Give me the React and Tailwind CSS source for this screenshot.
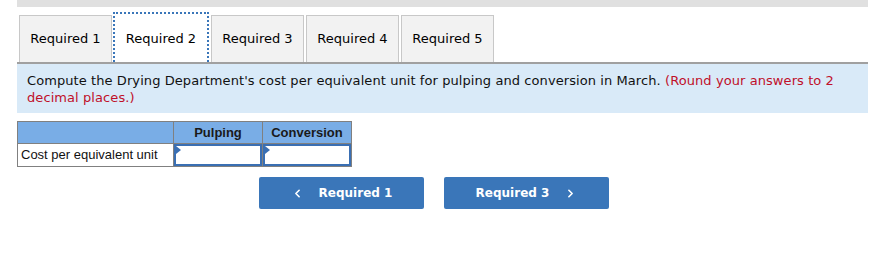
import { ChevronLeft, ChevronRight } from 'lucide-react'

const tabs = ['Required 1', 'Required 2', 'Required 3', 'Required 4', 'Required 5']

function Tab({ label, active }) {
  if (active) {
    return (
      <div className="ml-[1px] flex h-[50px] w-[96px] items-center justify-center border-2 border-b-0 border-dotted border-[#3a76b9] bg-white pt-[2px] text-[13px] text-black">
        {label}
      </div>
    )
  }
  return (
    <div className="ml-[2px] flex h-[47px] w-[93px] items-center justify-center border border-b-0 border-[#c8c8c8] bg-[#f2f2f2] text-[13px] text-black">
      {label}
    </div>
  )
}

function AnswerCell() {
  return (
    <td className="relative h-[23px] border border-[#808080] p-0">
      <div className="relative h-full w-full border-2 border-[#3a6fb3] bg-white">
        <span className="absolute left-0 top-0 h-0 w-0 border-y-[4px] border-l-[5px] border-y-transparent border-l-[#3a6fb3]" />
      </div>
    </td>
  )
}

export default function App() {
  return (
    <div className="h-[257px] w-[894px] bg-white font-['DejaVu_Sans',Verdana,sans-serif]">
      <div className="ml-[17px] w-[851px]">
        {/* top strip */}
        <div className="h-[7px] bg-[#e0e0e0]" />

        {/* tabs */}
        <div className="mt-[5px] flex items-end">
          {tabs.map((t, i) => (
            <Tab key={t} label={t} active={i === 1} />
          ))}
        </div>

        {/* prompt */}
        <div className="border-t-2 border-[#a0a0a0] bg-[#d9eaf8] px-[10px] pb-[7px] pt-[8px] text-[13px] leading-[17px] tracking-[0.08px] text-[#111]">
          Compute the Drying Department's cost per equivalent unit for pulping and conversion in March.{' '}
          <span className="text-[#c0102a]">(Round your answers to 2 decimal places.)</span>
        </div>

        {/* table */}
        <table className="mt-[8px] border-collapse font-['Liberation_Sans',Arial,sans-serif]">
          <thead>
            <tr className="bg-[#79ade6]">
              <th className="h-[22px] w-[156px] border border-[#808080]" />
              <th className="w-[89px] border border-[#808080] text-center text-[13px] font-bold text-[#1a1a1a]">Pulping</th>
              <th className="w-[89px] border border-[#808080] text-center text-[13px] font-bold text-[#1a1a1a]">Conversion</th>
            </tr>
          </thead>
          <tbody>
            <tr>
              <td className="border border-[#808080] px-[3px] text-[13px] text-[#111]">Cost per equivalent unit</td>
              <AnswerCell />
              <AnswerCell />
            </tr>
          </tbody>
        </table>

        {/* nav buttons */}
        <div className="ml-[242px] mt-[10px] flex gap-[20px]">
          <button className="flex h-[32px] w-[165px] items-center justify-center gap-[15px] rounded-[2px] bg-[#3a76b9] text-[12px] font-bold text-white">
            <ChevronLeft size={13} strokeWidth={3} />
            Required 1
          </button>
          <button className="flex h-[32px] w-[165px] items-center justify-center gap-[15px] rounded-[2px] bg-[#3a76b9] text-[12px] font-bold text-white">
            Required 3
            <ChevronRight size={13} strokeWidth={3} />
          </button>
        </div>
      </div>
    </div>
  )
}
